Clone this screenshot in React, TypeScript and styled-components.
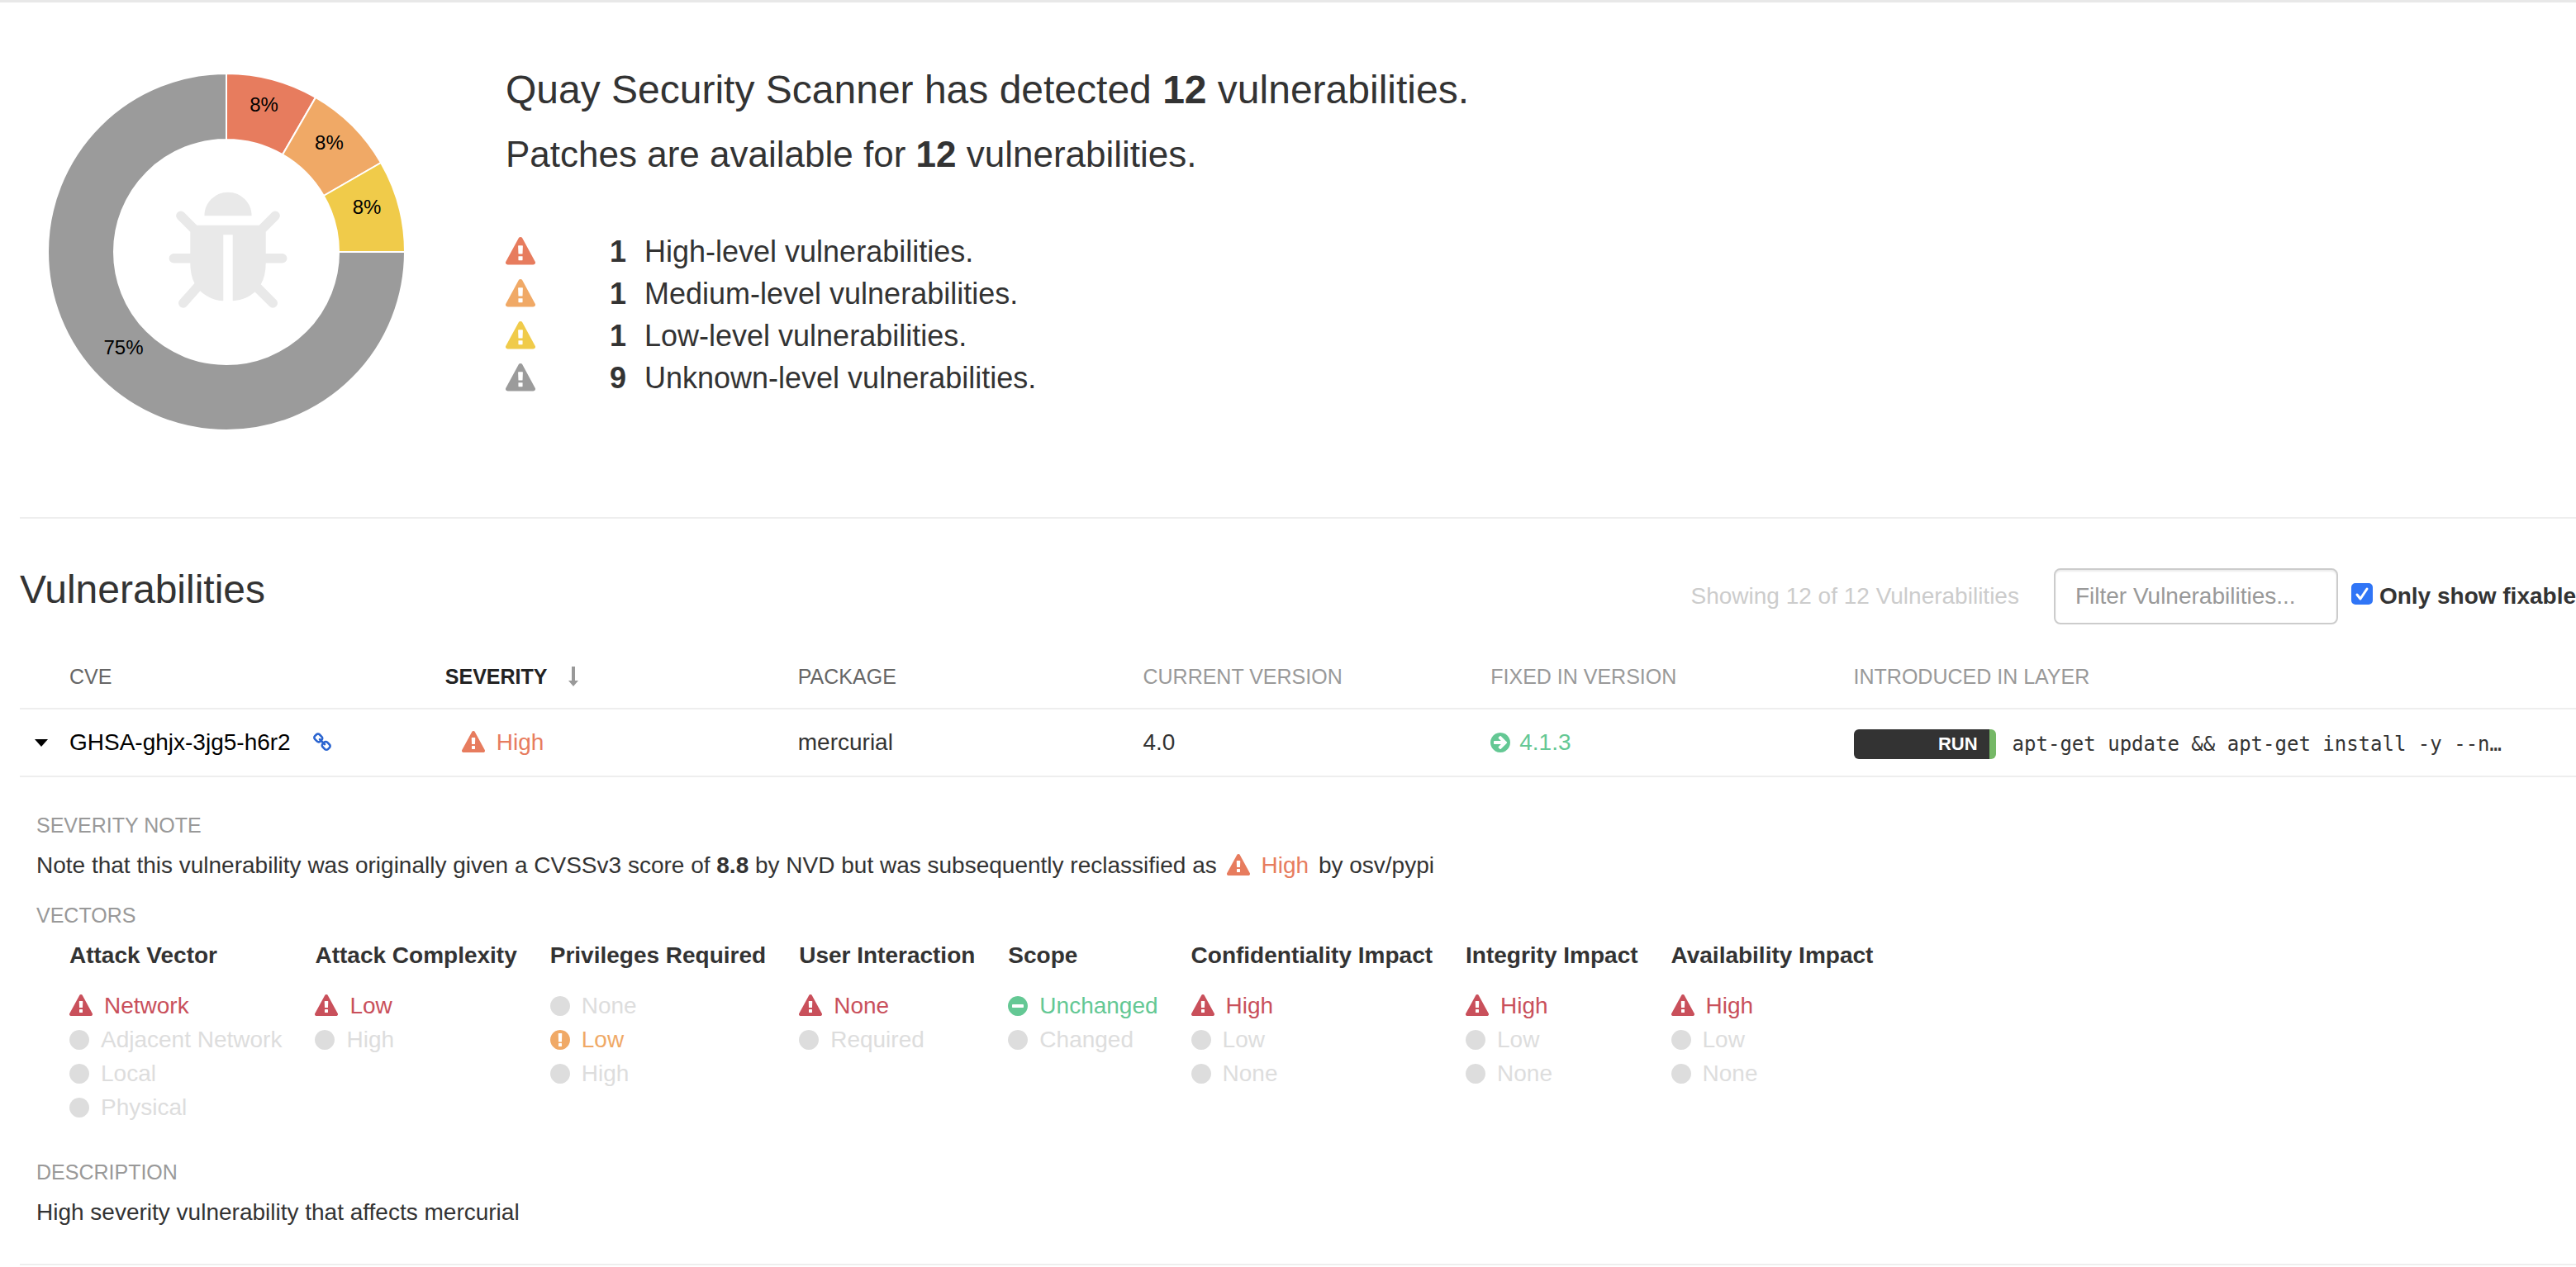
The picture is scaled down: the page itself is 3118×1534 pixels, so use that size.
import React, { useState } from 'react';
import styled, { createGlobalStyle } from 'styled-components';

const GlobalStyle = createGlobalStyle`
  * { box-sizing: border-box; }
  body {
    margin: 0;
    background: #fff;
    color: #333;
    font: 28px/40px "Liberation Sans", Arial, sans-serif;
  }
  h1, h2, h3, p, ul, dl, dd, dt { margin: 0; padding: 0; font-weight: 400; }
  ul { list-style: none; }
`;

const COLORS = {
  critical: '#c9505b',
  high: '#e77c5e',
  medium: '#f0a966',
  low: '#f0cb4a',
  unknown: '#9b9b9b',
  good: '#64c894',
  off: '#dddddd',
};

const PATHS = {
  warning:
    'M1024 1375v-190q0-14-9.5-23.5t-22.5-9.5h-192q-13 0-22.5 9.5t-9.5 23.5v190q0 14 9.5 23.5t22.5 9.5h192q13 0 22.5-9.5t9.5-23.5zm-2-374l18-459q0-12-10-19-13-11-24-11h-220q-11 0-24 11-10 7-10 21l17 457q0 10 10 16.5t24 6.5h185q14 0 23.5-6.5t10.5-16.5zm-14-934l768 1408q35 63-2 126-17 29-46.5 46t-63.5 17h-1536q-34 0-63.5-17t-46.5-46q-37-63-2-126l768-1408q17-31 47-49t65-18 65 18 47 49z',
  alert:
    'M896 128q209 0 385.5 103t279.5 279.5 103 385.5-103 385.5-279.5 279.5-385.5 103-385.5-103-279.5-279.5-103-385.5 103-385.5 279.5-279.5 385.5-103zm128 1247v-190q0-14-9-23.5t-22-9.5h-192q-13 0-23 10t-10 23v190q0 13 10 23t23 10h192q13 0 22-9.5t9-23.5zm-2-344l18-621q0-12-10-18-10-8-24-8h-220q-14 0-24 8-10 6-10 18l17 621q0 10 10 17.5t24 7.5h185q14 0 23.5-7.5t10.5-17.5z',
  minus:
    'M1344 960v-128q0-26-19-45t-45-19h-768q-26 0-45 19t-19 45v128q0 26 19 45t45 19h768q26 0 45-19t19-45zm320-64q0 209-103 385.5t-279.5 279.5-385.5 103-385.5-103-279.5-279.5-103-385.5 103-385.5 279.5-279.5 385.5-103 385.5 103 279.5 279.5 103 385.5z',
  circle:
    'M1664 896q0 209-103 385.5t-279.5 279.5-385.5 103-385.5-103-279.5-279.5-103-385.5 103-385.5 279.5-279.5 385.5-103 385.5 103 279.5 279.5 103 385.5z',
  arrow:
    'M1413 896q0-27-18-45l-91-91-362-362q-18-18-45-18t-45 18l-91 91q-18 18-18 45t18 45l189 189h-502q-26 0-45 19t-19 45v128q0 26 19 45t45 19h502l-189 189q-18 18-18 45t18 45l91 91q18 18 45 18t45-18l362-362 91-91q18-18 18-45zm251 0q0 209-103 385.5t-279.5 279.5-385.5 103-385.5-103-279.5-279.5-103-385.5 103-385.5 279.5-279.5 385.5-103 385.5 103 279.5 279.5 103 385.5z',
  link:
    'M1520 1216q0-40-28-68l-208-208q-28-28-68-28-42 0-72 32 3 3 19 18.5t21.5 21.5 15 19 13 25.5 3.5 27.5q0 40-28 68t-68 28q-15 0-27.5-3.5t-25.5-13-19-15-21.5-21.5-18.5-19q-33 31-33 73 0 40 28 68l206 207q27 27 68 27 40 0 68-26l147-146q28-28 28-67zm-703-705q0-40-28-68l-206-207q-28-28-68-28-39 0-68 27l-147 146q-28 28-28 67 0 40 28 68l208 208q27 27 68 27 42 0 72-31-3-3-19-18.5t-21.5-21.5-15-19-13-25.5-3.5-27.5q0-40 28-68t68-28q15 0 27.5 3.5t25.5 13 19 15 21.5 21.5 18.5 19q33-31 33-73zm895 705q0 120-85 203l-147 146q-83 83-203 83-121 0-204-85l-206-207q-83-83-83-203 0-123 88-209l-88-88q-86 88-208 88-120 0-204-84l-208-208q-84-84-84-204t85-203l147-146q83-83 203-83 121 0 204 85l206 207q83 83 83 203 0 123-88 209l88 88q86-88 208-88 120 0 204 84l208 208q84 84 84 204z',
  bug:
    'M1696 960q0 26-19 45t-45 19h-224q0 171-67 290l208 209q19 19 19 45t-19 45q-18 19-45 19t-45-19l-198-197q-5 5-15 13t-42 28.5-65 36.5-82 29-97 13v-896h-128v896q-51 0-101.5-13.5t-87-33-66-39-43.5-32.5l-15-14-183 207q-20 21-48 21-24 0-43-16-19-18-20.5-44.5t15.5-46.5l202-227q-58-114-58-274h-224q-26 0-45-19t-19-45 19-45 45-19h224v-294l-173-173q-19-19-19-45t19-45 45-19 45 19l173 173h844l173-173q19-19 45-19t45 19 19 45-19 45l-173 173v294h224q26 0 45 19t19 45zm-480-576h-640q0-133 93.5-226.5t226.5-93.5 226.5 93.5 93.5 226.5z',
};
type IconName = keyof typeof PATHS;

/* Round icons fill a narrower box than the triangle does. */
const ROUND: IconName[] = ['alert', 'minus', 'circle', 'arrow'];

const IconSvg = styled.svg<{ $size: number; $color: string }>`
  flex: none;
  width: auto;
  height: ${(p) => p.$size}px;
  fill: ${(p) => p.$color};
`;

function Icon({ name, size = 28, color }: { name: IconName; size?: number; color: string }) {
  const box = ROUND.includes(name) ? '128 0 1536 1792' : '0 0 1792 1792';
  return (
    <IconSvg viewBox={box} $size={size} $color={color} aria-hidden="true">
      <path d={PATHS[name]} />
    </IconSvg>
  );
}

/* ---------- Summary ---------- */

const Page = styled.main`
  border-top: 3px solid #e8e8e8;
  padding-left: 24px;
`;

const Summary = styled.section`
  display: flex;
  gap: 88px;
  padding: 52px 0 71px;
`;

const Chart = styled.svg`
  flex: none;
  width: 500px;
  height: 500px;
  font-size: 24px;
`;

const SummaryText = styled.div`
  padding-top: 26px;
`;

const Headline = styled.h1`
  font-size: 48px;
  line-height: 56px;
`;

const Subline = styled.h2`
  margin-top: 24px;
  font-size: 44px;
  line-height: 52px;
`;

const Levels = styled.ul`
  margin-top: 66px;
  font-size: 36px;
`;

const Level = styled.li`
  display: grid;
  grid-template-columns: 36px 110px 1fr;
  align-items: center;
  line-height: 51px;
`;

const LevelCount = styled.strong`
  text-align: right;
`;

const LevelText = styled.span`
  padding-left: 22px;
`;

const SLICES = [
  { from: 0, to: 30, color: COLORS.high, label: '8%' },
  { from: 30, to: 60, color: COLORS.medium, label: '8%' },
  { from: 60, to: 90, color: COLORS.low, label: '8%' },
  { from: 90, to: 360, color: COLORS.unknown, label: '75%' },
];

function polar(radius: number, degrees: number) {
  const a = (degrees * Math.PI) / 180;
  return [250 + radius * Math.sin(a), 250 - radius * Math.cos(a)];
}

function slicePath(from: number, to: number) {
  const large = to - from > 180 ? 1 : 0;
  const [a, b, c, d] = [polar(216, from), polar(216, to), polar(136, to), polar(136, from)];
  return `M${a}A216 216 0 ${large} 1 ${b}L${c}A136 136 0 ${large} 0 ${d}Z`;
}

function Donut() {
  return (
    <Chart viewBox="0 0 500 500" role="img" aria-label="Vulnerabilities by severity">
      {SLICES.map((s) => {
        const [x, y] = polar(176, (s.from + s.to) / 2);
        return (
          <g key={s.from}>
            <path d={slicePath(s.from, s.to)} fill={s.color} stroke="#fff" strokeWidth="2" />
            <text x={x} y={y} textAnchor="middle" fill="#000">
              {s.label}
            </text>
          </g>
        );
      })}
      <svg x="172" y="172" width="160" height="160" viewBox="0 0 1792 1792" fill="#e9e9e9">
        <path d={PATHS.bug} />
      </svg>
    </Chart>
  );
}

const LEVELS = [
  { n: 1, name: 'High', color: COLORS.high },
  { n: 1, name: 'Medium', color: COLORS.medium },
  { n: 1, name: 'Low', color: COLORS.low },
  { n: 9, name: 'Unknown', color: COLORS.unknown },
];

/* ---------- Toolbar ---------- */

const Section = styled.section`
  border-top: 2px solid #eee;
`;

const Toolbar = styled.header`
  display: flex;
  align-items: center;
  padding-top: 52px;
  white-space: nowrap;
`;

const SectionTitle = styled.h2`
  flex: 1;
  padding-bottom: 16px;
  font-size: 48px;
  line-height: 60px;
`;

const Showing = styled.span`
  margin-right: 42px;
  color: #ccc;
`;

const FilterInput = styled.input`
  width: 344px;
  height: 68px;
  margin: 8px 0;
  padding: 0 24px;
  border: 2px solid #ccc;
  border-radius: 8px;
  box-shadow: inset 0 2px 2px rgba(0, 0, 0, 0.075);
  background: #fff;
  color: #555;
  font: inherit;
  &::placeholder { color: #999; opacity: 1; }
`;

const FixableLabel = styled.label`
  display: flex;
  align-items: center;
  gap: 8px;
  padding-left: 16px;
  font-weight: 700;
`;

const Checkbox = styled.input`
  appearance: none;
  flex: none;
  width: 26px;
  height: 26px;
  margin: 0 0 6px;
  border: 2px solid #767676;
  border-radius: 5px;
  background: #fff center / 26px 26px no-repeat;
  &:checked {
    border-color: #3075f6;
    background-color: #3075f6;
    background-image: url("data:image/svg+xml,%3Csvg xmlns='http://www.w3.org/2000/svg' viewBox='0 0 26 26'%3E%3Cpath d='M7 14l4 5 8-12' fill='none' stroke='white' stroke-width='3' stroke-linecap='round' stroke-linejoin='round'/%3E%3C/svg%3E");
  }
`;

/* ---------- Table ---------- */

const Table = styled.table`
  width: 100%;
  table-layout: fixed;
  border-collapse: collapse;
`;

const Col = styled.col<{ $width?: string }>`
  width: ${(p) => p.$width ?? 'auto'};
`;

const Th = styled.th`
  height: 94px;
  padding: 16px 0 0;
  border-bottom: 2px solid #eee;
  color: #999;
  font-size: 25px;
  font-weight: 400;
  text-align: left;
  text-transform: uppercase;
  white-space: nowrap;
`;

const SortButton = styled.button<{ $active?: boolean }>`
  display: inline-flex;
  align-items: center;
  gap: 26px;
  padding: 0;
  border: 0;
  background: none;
  color: ${(p) => (p.$active ? '#222' : '#666')};
  font: inherit;
  font-weight: ${(p) => (p.$active ? 700 : 400)};
  text-transform: uppercase;
`;

const Td = styled.td`
  height: 82px;
  padding: 0;
  border-bottom: 2px solid #eee;
  white-space: nowrap;
`;

const CaretButton = styled.button`
  display: flex;
  padding: 0 0 0 18px;
  border: 0;
  background: none;
`;

const Inline = styled.span<{ $gap: number; $color?: string; $indent?: number; $space?: number }>`
  display: inline-flex;
  align-items: center;
  gap: ${(p) => p.$gap}px;
  margin: 0 ${(p) => p.$space ?? 0}px;
  padding-left: ${(p) => p.$indent ?? 0}px;
  color: ${(p) => p.$color ?? 'inherit'};
  vertical-align: bottom;
`;

const CveLink = styled.a`
  display: inline-flex;
  align-items: center;
  gap: 26px;
  color: #000;
  text-decoration: none;
`;

const Layer = styled.div`
  display: flex;
  align-items: center;
  gap: 20px;
  padding-top: 4px;
`;

const Command = styled.span`
  width: 172px;
  padding-right: 22px;
  border-radius: 6px;
  background: linear-gradient(to left, #75b866 8px, #333 8px);
  color: #fff;
  font-size: 22px;
  font-weight: 700;
  line-height: 36px;
  text-align: right;
`;

const Code = styled.code`
  font: 24px/40px "DejaVu Sans Mono", monospace;
`;

/* ---------- Expanded details ---------- */

const Details = styled.dl`
  padding: 38px 0 22px 20px;
  border-bottom: 2px solid #eee;
`;

const Term = styled.dt`
  color: #999;
  font-size: 25px;
  text-transform: uppercase;
`;

const Definition = styled.dd`
  padding: 9px 0 20px;
`;

const Vectors = styled.dd`
  display: flex;
  gap: 40px;
  padding: 9px 0 38px 40px;
`;

const VectorTitle = styled.h3`
  margin-bottom: 20px;
  font-size: 28px;
  font-weight: 700;
  white-space: nowrap;
`;

const Option = styled.li<{ $color: string }>`
  display: flex;
  align-items: center;
  gap: 14px;
  line-height: 41px;
  white-space: nowrap;
  color: ${(p) => p.$color};
`;

type Opt = [string, IconName?, string?];
const W = (name: string): Opt => [name, 'warning', COLORS.critical];
const VECTORS: { title: string; options: Opt[] }[] = [
  { title: 'Attack Vector', options: [W('Network'), ['Adjacent Network'], ['Local'], ['Physical']] },
  { title: 'Attack Complexity', options: [W('Low'), ['High']] },
  { title: 'Privileges Required', options: [['None'], ['Low', 'alert', COLORS.medium], ['High']] },
  { title: 'User Interaction', options: [W('None'), ['Required']] },
  { title: 'Scope', options: [['Unchanged', 'minus', COLORS.good], ['Changed']] },
  { title: 'Confidentiality Impact', options: [W('High'), ['Low'], ['None']] },
  { title: 'Integrity Impact', options: [W('High'), ['Low'], ['None']] },
  { title: 'Availability Impact', options: [W('High'), ['Low'], ['None']] },
];

export default function App() {
  const [filter, setFilter] = useState('');
  const [fixable, setFixable] = useState(true);
  return (
    <>
      <GlobalStyle />
      <Page>
        <Summary>
          <Donut />
          <SummaryText>
            <Headline>
              Quay Security Scanner has detected <strong>12</strong> vulnerabilities.
            </Headline>
            <Subline>
              Patches are available for <strong>12</strong> vulnerabilities.
            </Subline>
            <Levels>
              {LEVELS.map((l) => (
                <Level key={l.name}>
                  <Icon name="warning" size={36} color={l.color} />
                  <LevelCount>{l.n}</LevelCount>
                  <LevelText>{l.name}-level vulnerabilities.</LevelText>
                </Level>
              ))}
            </Levels>
          </SummaryText>
        </Summary>

        <Section>
          <Toolbar>
            <SectionTitle>Vulnerabilities</SectionTitle>
            <Showing>Showing 12 of 12 Vulnerabilities</Showing>
            <FilterInput
              aria-label="Filter Vulnerabilities"
              placeholder="Filter Vulnerabilities..."
              value={filter}
              onChange={(e) => setFilter(e.target.value)}
            />
            <FixableLabel>
              <Checkbox type="checkbox" checked={fixable} onChange={(e) => setFixable(e.target.checked)} />
              Only show fixable
            </FixableLabel>
          </Toolbar>

          <Table>
            <colgroup>
              <Col $width="60px" />
              <Col $width="14.7%" />
              <Col $width="13.8%" />
              <Col $width="13.5%" />
              <Col $width="13.6%" />
              <Col $width="14.2%" />
              <Col />
            </colgroup>
            <thead>
              <tr>
                <Th aria-label="Expand" />
                <Th><SortButton>CVE</SortButton></Th>
                <Th>
                  <SortButton $active>
                    Severity
                    <svg width="12" height="24" viewBox="0 0 12 24" fill="#999" aria-hidden="true">
                      <path d="M4 0h4v17h4l-6 7-6-7h4z" />
                    </svg>
                  </SortButton>
                </Th>
                <Th><SortButton>Package</SortButton></Th>
                <Th>Current version</Th>
                <Th>Fixed in version</Th>
                <Th>Introduced in layer</Th>
              </tr>
            </thead>
            <tbody>
              <tr>
                <Td>
                  <CaretButton aria-label="Collapse details">
                    <svg width="16" height="9" viewBox="0 0 16 9" aria-hidden="true">
                      <path d="M0 0h16L8 9z" />
                    </svg>
                  </CaretButton>
                </Td>
                <Td>
                  <CveLink href="#cve">
                    GHSA-ghjx-3jg5-h6r2
                    <Icon name="link" size={24} color="#2a64d0" />
                  </CveLink>
                </Td>
                <Td>
                  <Inline $gap={14} $color={COLORS.high} $indent={20}>
                    <Icon name="warning" color={COLORS.high} />
                    High
                  </Inline>
                </Td>
                <Td>mercurial</Td>
                <Td>4.0</Td>
                <Td>
                  <Inline $gap={11} $color={COLORS.good}>
                    <Icon name="arrow" color={COLORS.good} />
                    4.1.3
                  </Inline>
                </Td>
                <Td>
                  <Layer>
                    <Command>RUN</Command>
                    <Code>apt-get update &amp;&amp; apt-get install -y --n…</Code>
                  </Layer>
                </Td>
              </tr>
            </tbody>
          </Table>

          <Details>
            <Term>Severity Note</Term>
            <Definition>
              Note that this vulnerability was originally given a CVSSv3 score of <strong>8.8</strong> by NVD but was
              subsequently reclassified as{' '}
              <Inline $gap={14} $color={COLORS.high} $space={4}>
                <Icon name="warning" color={COLORS.high} />
                High
              </Inline>{' '}
              by osv/pypi
            </Definition>
            <Term>Vectors</Term>
            <Vectors>
              {VECTORS.map((v) => (
                <div key={v.title}>
                  <VectorTitle>{v.title}</VectorTitle>
                  <ul>
                    {v.options.map(([name, icon = 'circle', color = COLORS.off]) => (
                      <Option key={name} $color={color}>
                        <Icon name={icon} color={color} />
                        {name}
                      </Option>
                    ))}
                  </ul>
                </div>
              ))}
            </Vectors>
            <Term>Description</Term>
            <Definition>High severity vulnerability that affects mercurial</Definition>
          </Details>
        </Section>
      </Page>
    </>
  );
}
